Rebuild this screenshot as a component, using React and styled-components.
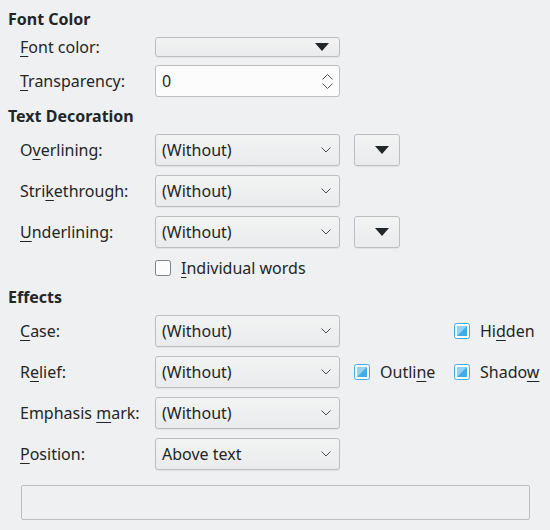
import React from "react";
import styled, { createGlobalStyle } from "styled-components";

const GlobalStyle = createGlobalStyle`
  html, body {
    margin: 0;
    padding: 0;
    background: #eff0f1;
  }
  body {
    font-family: "Noto Sans", "DejaVu Sans", sans-serif;
    font-size: 16px;
    color: #232627;
  }
`;

const Page = styled.div`
  width: 550px;
  height: 530px;
  box-sizing: border-box;
  padding: 9px 8px 0 8px;
  display: flex;
  flex-direction: column;
  gap: 9px;
`;

const Section = styled.section`
  display: flex;
  flex-direction: column;
`;

const Heading = styled.h2`
  margin: 0 0 8px 0;
  font-size: 16px;
  font-weight: 700;
  line-height: 20px;
  height: 20px;
`;

const Grid = styled.div`
  display: grid;
  grid-template-columns: 121px 185px 86px 1fr;
  column-gap: 14px;
  row-gap: ${(p) => p.$gap || 9}px;
  padding-left: 12px;
  align-items: center;
`;

const Label = styled.label`
  grid-column: 1;
  line-height: 20px;
  white-space: nowrap;
`;

const Key = styled.u`
  text-decoration-thickness: 1px;
  text-underline-offset: 3px;
`;

const Combo = styled.div`
  grid-column: 2;
  height: 32px;
  box-sizing: border-box;
  border: 1px solid #bcbebf;
  border-radius: 3px;
  background: linear-gradient(#f2f3f3, #eaebec);
  box-shadow: 0 1px 1px rgba(0, 0, 0, 0.06);
  display: flex;
  align-items: center;
  justify-content: space-between;
  padding: 0 8px 0 6px;
`;

const ColorBox = styled(Combo)`
  height: 20px;
  padding: 0 10px 0 6px;
  justify-content: flex-end;
`;

const SpinBox = styled(Combo)`
  background: #fcfcfc;
  box-shadow: none;
  padding: 0 6px 0 6px;
`;

const SpinArrows = styled.div`
  display: flex;
  flex-direction: column;
  gap: 3px;
`;

const SmallButton = styled.div`
  grid-column: 3;
  width: 46px;
  height: 32px;
  box-sizing: border-box;
  border: 1px solid #bcbebf;
  border-radius: 3px;
  background: linear-gradient(#f2f3f3, #eaebec);
  box-shadow: 0 1px 1px rgba(0, 0, 0, 0.06);
  display: flex;
  align-items: center;
  justify-content: flex-end;
  padding-right: 10px;
`;

const Check = styled.label`
  grid-column: ${(p) => p.$col};
  display: flex;
  align-items: center;
  gap: 10px;
  line-height: 20px;
  white-space: nowrap;
`;

const CheckRow = styled.div`
  grid-column: 2 / span 3;
  height: 21px;
  display: flex;
  align-items: center;
`;

const Preview = styled.div`
  margin: 15px 0 0 13px;
  width: 509px;
  height: 35px;
  box-sizing: border-box;
  border: 1px solid #bcbebf;
  border-radius: 2px;
  background: #eff0f1;
`;

const Chevron = () => (
  <svg width="10" height="6" viewBox="0 0 10 6">
    <path d="M0.5 0.5 L5 5 L9.5 0.5" fill="none" stroke="#4d5052" strokeWidth="1" />
  </svg>
);

const Triangle = () => (
  <svg width="14" height="8" viewBox="0 0 14 8">
    <path d="M0 0 H14 L7 8 Z" fill="#232627" />
  </svg>
);

const SpinIcon = ({ up }) => (
  <svg width="11" height="6" viewBox="0 0 11 6">
    <path
      d={up ? "M0.5 5.5 L5.5 0.5 L10.5 5.5" : "M0.5 0.5 L5.5 5.5 L10.5 0.5"}
      fill="none"
      stroke="#4d5052"
      strokeWidth="1"
    />
  </svg>
);

const Box = ({ partial }) => (
  <svg width="16" height="16" viewBox="0 0 16 16">
    <rect
      x="0.5"
      y="0.5"
      width="15"
      height="15"
      rx="2"
      fill="#fcfcfc"
      stroke={partial ? "#3daee9" : "#7f8183"}
      strokeWidth="1"
    />
    {partial && (
      <>
        <rect x="3" y="3" width="10" height="10" fill="#3daee9" opacity="0.55" />
        <path d="M13 3 V13 H3 Z" fill="#3daee9" />
      </>
    )}
  </svg>
);

const Select = ({ value }) => (
  <Combo>
    <span>{value}</span>
    <Chevron />
  </Combo>
);

export default function App() {
  return (
    <>
      <GlobalStyle />
      <Page>
        <Section>
          <Heading>Font Color</Heading>
          <Grid $gap={8}>
            <Label>
              <Key>F</Key>ont color:
            </Label>
            <ColorBox>
              <Triangle />
            </ColorBox>
            <Label>
              <Key>T</Key>ransparency:
            </Label>
            <SpinBox>
              <span>0</span>
              <SpinArrows>
                <SpinIcon up />
                <SpinIcon />
              </SpinArrows>
            </SpinBox>
          </Grid>
        </Section>

        <Section>
          <Heading>Text Decoration</Heading>
          <Grid>
            <Label>
              O<Key>v</Key>erlining:
            </Label>
            <Select value="(Without)" />
            <SmallButton>
              <Triangle />
            </SmallButton>
            <Label>
              Stri<Key>k</Key>ethrough:
            </Label>
            <Select value="(Without)" />
            <Label>
              <Key>U</Key>nderlining:
            </Label>
            <Select value="(Without)" />
            <SmallButton>
              <Triangle />
            </SmallButton>
            <CheckRow>
              <Check $col={2}>
                <Box />
                <span>
                  <Key>I</Key>ndividual words
                </span>
              </Check>
            </CheckRow>
          </Grid>
        </Section>

        <Section>
          <Heading>Effects</Heading>
          <Grid>
            <Label>
              <Key>C</Key>ase:
            </Label>
            <Select value="(Without)" />
            <Check $col={4}>
              <Box partial />
              <span>
                Hi<Key>d</Key>den
              </span>
            </Check>
            <Label>
              R<Key>e</Key>lief:
            </Label>
            <Select value="(Without)" />
            <Check $col={3}>
              <Box partial />
              <span>
                Outli<Key>n</Key>e
              </span>
            </Check>
            <Check $col={4}>
              <Box partial />
              <span>
                Shado<Key>w</Key>
              </span>
            </Check>
            <Label>
              Emphasis <Key>m</Key>ark:
            </Label>
            <Select value="(Without)" />
            <Label>
              <Key>P</Key>osition:
            </Label>
            <Select value="Above text" />
          </Grid>
          <Preview />
        </Section>
      </Page>
    </>
  );
}
